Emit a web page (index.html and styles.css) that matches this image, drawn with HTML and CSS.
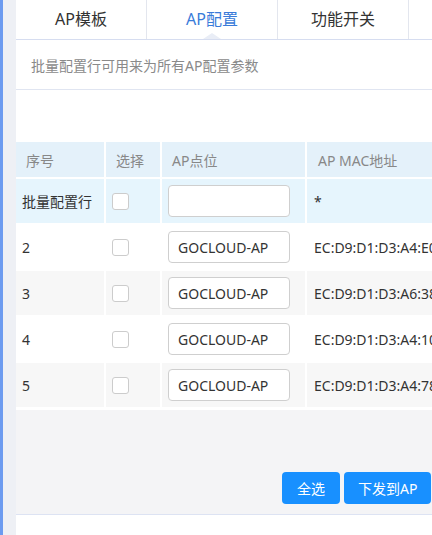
FILE: index.html
```html
<!DOCTYPE html>
<html lang="zh">
<head>
<meta charset="utf-8">
<title>AP配置</title>
<link rel="stylesheet" href="styles.css">
</head>
<body>
<div class="rail"></div>
<div class="gutter"></div>
<div class="main">
  <div class="tabs">
    <div class="tab">AP模板</div>
    <div class="tab active">AP配置</div>
    <div class="tab">功能开关</div>
    <div class="tab"></div>
  </div>
  <div class="panel">
    <div class="desc">批量配置行可用来为所有AP配置参数</div>
    <div class="spacer"></div>
    <table class="grid">
      <colgroup>
        <col class="c-no">
        <col class="c-sel">
        <col class="c-name">
        <col class="c-mac">
      </colgroup>
      <thead>
        <tr>
          <th>序号</th>
          <th>选择</th>
          <th>AP点位</th>
          <th>AP MAC地址</th>
        </tr>
      </thead>
      <tbody>
        <tr class="batch">
          <td>批量配置行</td>
          <td><span class="check"></span></td>
          <td><input class="field" type="text" value=""></td>
          <td>*</td>
        </tr>
        <tr>
          <td>2</td>
          <td><span class="check"></span></td>
          <td><input class="field" type="text" value="GOCLOUD-AP"></td>
          <td>EC:D9:D1:D3:A4:E0</td>
        </tr>
        <tr class="alt">
          <td>3</td>
          <td><span class="check"></span></td>
          <td><input class="field" type="text" value="GOCLOUD-AP"></td>
          <td>EC:D9:D1:D3:A6:38</td>
        </tr>
        <tr>
          <td>4</td>
          <td><span class="check"></span></td>
          <td><input class="field" type="text" value="GOCLOUD-AP"></td>
          <td>EC:D9:D1:D3:A4:10</td>
        </tr>
        <tr class="alt">
          <td>5</td>
          <td><span class="check"></span></td>
          <td><input class="field" type="text" value="GOCLOUD-AP"></td>
          <td>EC:D9:D1:D3:A4:78</td>
        </tr>
      </tbody>
    </table>
    <div class="footer">
      <button class="btn">全选</button>
      <button class="btn">下发到AP</button>
    </div>
    <div class="bottom"></div>
  </div>
</div>
</body>
</html>
```
FILE: styles.css
```css
html, body {
  margin: 0;
  padding: 0;
  height: 100%;
}
body {
  display: flex;
  overflow: hidden;
  background: #ffffff;
  font-family: "Noto Sans", "Noto Sans CJK SC", sans-serif;
  font-size: 14px;
  color: #333333;
}
.rail {
  flex: 0 0 3px;
  background: #6c9bf0;
}
.gutter {
  flex: 0 0 13px;
  background: #eef0f5;
}
.main {
  flex: 1 0 auto;
  min-width: 0;
  display: flex;
  flex-direction: column;
  background: #ffffff;
}
.tabs {
  display: flex;
  height: 39px;
  background: #ffffff;
}
.tab {
  position: relative;
  flex: 0 0 130px;
  border-right: 1px solid #e3e6ee;
  text-align: center;
  line-height: 39px;
  font-size: 16px;
  color: #333333;
}
.tab.active {
  color: #3a7bd9;
}
.tab.active::after {
  content: "";
  position: absolute;
  left: 50%;
  bottom: 0;
  margin-left: -9px;
  border-left: 9px solid transparent;
  border-right: 9px solid transparent;
  border-bottom: 6px solid #e9edf6;
}
.panel {
  flex: 1;
  display: flex;
  flex-direction: column;
  border-top: 1px solid #d6ddf0;
  background: #ffffff;
}
.desc {
  height: 45px;
  padding: 4px 0 0 15px;
  line-height: 44px;
  font-size: 14px;
  color: #8a8a8a;
  border-bottom: 1px solid #e0e5f1;
}
.spacer {
  height: 50px;
}
.grid {
  border-collapse: separate;
  border-spacing: 2px;
  margin-left: -2px;
  background: transparent;
  table-layout: fixed;
  width: 527px;
}
.c-no { width: 88px; }
.c-sel { width: 54px; }
.c-name { width: 143px; }
.c-mac { width: 232px; }
.grid th {
  box-sizing: border-box;
  height: 35px;
  padding: 0 0 0 10px;
  text-align: left;
  font-weight: normal;
  color: #888888;
  background: #e4f1fa;
  white-space: nowrap;
}
.grid th:last-child {
  padding-left: 11px;
}
.grid td {
  box-sizing: border-box;
  height: 44px;
  padding: 0 0 0 6px;
  white-space: nowrap;
  overflow: hidden;
  background: #ffffff;
  color: #333333;
}
.grid .batch td {
  background: #e6f5fd;
}
.grid .alt td {
  background: #f7f7f7;
}
.grid td:last-child {
  padding-left: 7px;
}
.check {
  display: block;
  width: 15px;
  height: 15px;
  border: 1px solid #cccccc;
  border-radius: 3px;
  background: #ffffff;
}
.field {
  box-sizing: border-box;
  width: 122px;
  height: 32px;
  padding: 0 9px;
  border: 1px solid #cfcfcf;
  border-radius: 4px;
  background: #ffffff;
  font-family: "Noto Sans", "Noto Sans CJK SC", sans-serif;
  font-size: 14px;
  color: #333333;
  outline: none;
  display: block;
}
.footer {
  height: 105px;
  margin-top: 1px;
  box-sizing: border-box;
  display: flex;
  align-items: flex-end;
  gap: 4px;
  padding: 0 0 10px 266px;
  background: #f4f4f6;
  border-bottom: 1px solid #dde3f3;
}
.btn {
  flex: 0 0 auto;
  height: 32px;
  padding: 0 14px;
  border: none;
  border-radius: 4px;
  background: #1890ff;
  color: #ffffff;
  font-family: "Noto Sans", "Noto Sans CJK SC", sans-serif;
  font-size: 14px;
}
.btn:first-child {
  padding: 0 15px;
}
.bottom {
  flex: 1;
  background: #ffffff;
}
```
